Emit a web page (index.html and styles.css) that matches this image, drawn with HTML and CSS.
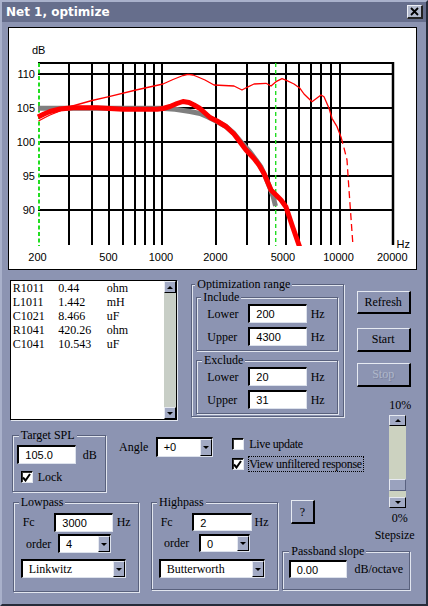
FILE: index.html
```html
<!DOCTYPE html>
<html>
<head>
<meta charset="utf-8">
<title>Net 1, optimize</title>
<link rel="stylesheet" href="styles.css">
</head>
<body>
<div class="window">
  <div class="titlebar">
    <span class="title">Net 1, optimize</span>
    <span class="close"><svg width="9" height="9" viewBox="0 0 9 9"><path d="M1 1L8 8M8 1L1 8" stroke="#000" stroke-width="1.8" fill="none"/></svg></span>
  </div>

  <div class="graph">
    <svg class="chart" width="407" height="241" viewBox="9 28 407 241">
      <defs>
        <clipPath id="plot"><rect x="36" y="60" width="360" height="186"/></clipPath>
      </defs>
      <g stroke="#000" stroke-width="2" fill="none">
        <path d="M38 63H394M38 74H393M38 108H393M38 142H393M38 176H393M38 210H393"/>
        <path d="M69 63V245M92 63V245M109 63V245M123 63V245M135 63V245M145 63V245M154 63V245M162 63V245M216 63V245M247 63V245M269 63V245M286 63V245M299 63V245M311 63V245M321 63V245M331 63V245M340 63V245"/>
        <path d="M393 62V245" stroke-width="2.5"/>
      </g>
      <path d="M39 63V246" stroke="#22dd22" stroke-width="2" stroke-dasharray="4 2.5" fill="none"/>
      <path d="M275.7 63V246" stroke="#22dd22" stroke-width="1.4" stroke-dasharray="4 3" fill="none"/>
      <g font-family="Liberation Sans, Arial, sans-serif" font-size="11" fill="#000">
        <text x="32" y="54">dB</text>
        <text x="35" y="78" text-anchor="end">110</text>
        <text x="35" y="112" text-anchor="end">105</text>
        <text x="35" y="146" text-anchor="end">100</text>
        <text x="35" y="180" text-anchor="end">95</text>
        <text x="35" y="213.5" text-anchor="end">90</text>
        <text x="37.5" y="261" text-anchor="middle">200</text>
        <text x="108.5" y="261" text-anchor="middle">500</text>
        <text x="161" y="261" text-anchor="middle">1000</text>
        <text x="215.5" y="261" text-anchor="middle">2000</text>
        <text x="283" y="261" text-anchor="middle">5000</text>
        <text x="338.5" y="261" text-anchor="middle">10000</text>
        <text x="392.3" y="261" text-anchor="middle">20000</text>
        <text x="396.5" y="247.5">Hz</text>
      </g>
      <g clip-path="url(#plot)" fill="none" stroke-linejoin="round">
        <polyline stroke="#7f7f7f" stroke-width="5" points="38,108.3 160,108.3 175,109.3 190,111.5 200,113.5 208,117 216,121 226,126.5 234,133.5 242,143 250,152 256,160 261,167 266,178 270,188 273,196 275.5,206"/>
        <polyline stroke="#ff0000" stroke-width="1.3" points="38.5,121 45,117.5 50,115 60,111 69,107 92,100.5 109,96.7 136,90 163,84 173,79.5 183,75.5 188,74.3 193,75 198,77 205,80 214,85 234,86 242,90 247,87.3 254,84 266,83.3 271,86 276,81.7 282,78.7 287,80.7 294,84 300,88.3 304,94 312,101.7 317,98 321,95 324,96.7 329,108.3 332,118.3 337,126.7 341,137"/>
        <polyline stroke="#ff0000" stroke-width="1.3" stroke-dasharray="7 4" points="341,137 344,148 347,160 349,190 353,246"/>
        <polyline stroke="#ff0000" stroke-width="5" points="38,117 44,114 50,111.5 60,109 73,107.7 97,107.7 123,109.3 157,109.3 163,108.5 170,106.5 177,103.5 183,101.5 189,102.5 194,105 200,108.5 205,113 210,117.5 217,121 226,126.5 234,134 240,142 246,150 254,158.5 259,165 264,173.5 268,183 271,190 276,195 281,200 286,207 292,225 300,248"/>
      </g>
    </svg>
  </div>

  <div class="lower">
    <div class="listbox">
      <div class="list-items">
        <div class="item"><span class="c1">R1011</span><span class="c2">0.44</span><span>ohm</span></div>
        <div class="item"><span class="c1">L1011</span><span class="c2">1.442</span><span>mH</span></div>
        <div class="item"><span class="c1">C1021</span><span class="c2">8.466</span><span>uF</span></div>
        <div class="item"><span class="c1">R1041</span><span class="c2">420.26</span><span>ohm</span></div>
        <div class="item"><span class="c1">C1041</span><span class="c2">10.543</span><span>uF</span></div>
      </div>
      <div class="vscroll">
        <div class="sbtn"><i class="tri-up"></i></div>
        <div class="sfill"></div>
        <div class="sbtn"><i class="tri-down"></i></div>
      </div>
    </div>

    <div class="group opt">
      <span class="glabel gl-opt">Optimization range</span>
      <div class="group sub">
        <span class="glabel gl-sub">Include</span>
        <div class="frow"><span class="flabel">Lower</span><div class="input w58">200</div><span class="unit">Hz</span></div>
        <div class="frow"><span class="flabel">Upper</span><div class="input w58">4300</div><span class="unit">Hz</span></div>
      </div>
      <div class="group sub">
        <span class="glabel gl-sub2">Exclude</span>
        <div class="frow"><span class="flabel">Lower</span><div class="input w58">20</div><span class="unit">Hz</span></div>
        <div class="frow"><span class="flabel">Upper</span><div class="input w58">31</div><span class="unit">Hz</span></div>
      </div>
    </div>

    <div class="rcol">
      <div class="btn b-refresh">Refresh</div>
      <div class="btn b-start">Start</div>
      <div class="btn b-stop disabled">Stop</div>
      <div class="pct10">10%</div>
      <div class="stepbar">
        <div class="sbtn sb-h"><i class="tri-up"></i></div>
        <div class="strack1"></div>
        <div class="thumb"></div>
        <div class="strack2"></div>
        <div class="sbtn sb-h"><i class="tri-down"></i></div>
      </div>
      <div class="pct0">0%</div>
      <div class="stepsize">Stepsize</div>
    </div>

    <div class="row2">
      <div class="group target">
        <span class="glabel gl-target">Target SPL</span>
        <div class="trow"><div class="input w59">105.0</div><span class="unit u-db">dB</span></div>
        <div class="lockrow">
          <span class="cb"><svg width="9" height="9" viewBox="0 0 9 9"><path d="M1 4.5L3.5 7.5L8 1" stroke="#000" stroke-width="2" fill="none"/></svg></span>
          <span class="locktext">Lock</span>
        </div>
      </div>
      <div class="angle">
        <span class="alabel">Angle</span>
        <div class="combo c-angle"><span class="val">+0</span><span class="dd"><i class="tri-down"></i></span></div>
      </div>
      <div class="checks">
        <div class="chk"><span class="cb"></span><span class="ctext">Live update</span></div>
        <div class="chk"><span class="cb"><svg width="9" height="9" viewBox="0 0 9 9"><path d="M1 4.5L3.5 7.5L8 1" stroke="#000" stroke-width="2" fill="none"/></svg></span><span class="ctext focus">View unfiltered response</span></div>
      </div>
    </div>

    <div class="filters">
      <div class="group lowpass">
        <span class="glabel gl-lp">Lowpass</span>
        <div class="frow-fc"><span class="fc">Fc</span><div class="input w58">3000</div><span class="unit">Hz</span></div>
        <div class="frow-order"><span class="ord">order</span><div class="combo c-ord"><span class="val">4</span><span class="dd"><i class="tri-down"></i></span></div></div>
        <div class="frow-type"><div class="combo c-type"><span class="val serif">Linkwitz</span><span class="dd"><i class="tri-down"></i></span></div></div>
      </div>
      <div class="group highpass">
        <span class="glabel gl-hp">Highpass</span>
        <div class="frow-fc"><span class="fc">Fc</span><div class="input w60">2</div><span class="unit u-hp">Hz</span></div>
        <div class="frow-order"><span class="ord ord-hp">order</span><div class="combo c-ord2"><span class="val">0</span><span class="dd"><i class="tri-down"></i></span></div></div>
        <div class="frow-type"><div class="combo c-type2"><span class="val serif">Butterworth</span><span class="dd"><i class="tri-down"></i></span></div></div>
      </div>
    </div>

    <div class="btn help">?</div>

    <div class="group passband">
      <span class="glabel gl-pb">Passband slope</span>
      <div class="input w58">0.00</div><span class="unit u-oct">dB/octave</span>
    </div>
  </div>
</div>
</body>
</html>
```
FILE: styles.css
```css
* { box-sizing: border-box; }

body {
  margin: 0;
  background: #8c94b2;
  font-family: "Liberation Serif", "Times New Roman", serif;
  font-size: 12px;
  line-height: 14px;
  color: #000;
}

.window {
  width: 428px;
  height: 606px;
  background: #8c94b2;
  border: 2px solid;
  border-color: #a9b1cb #262c3a #262c3a #a9b1cb;
  display: flex;
  flex-direction: column;
  overflow: hidden;
}

.titlebar {
  flex: none;
  height: 20px;
  background: #666e8c;
  display: flex;
  align-items: center;
  padding-left: 4px;
}

.title {
  font-family: "DejaVu Sans", "Liberation Sans", sans-serif;
  font-weight: bold;
  font-size: 12px;
  color: #fff;
}

.close {
  margin-left: auto;
  margin-right: 3px;
  width: 16px;
  height: 14px;
  background: #b3bacd;
  border-style: solid;
  border-width: 1px 2px 2px 1px;
  border-color: #eef0f6 #222 #222 #eef0f6;
  display: flex;
  align-items: center;
  justify-content: center;
}

.graph {
  flex: none;
  margin: 5px 0 0 6px;
  width: 409px;
  height: 243px;
  background: #fff;
  border: 1px solid #000;
}

.chart { display: block; }

.lower {
  flex: none;
  display: grid;
  grid-template-columns: 184px 96px 74px 70px;
  grid-template-rows: 160px 67px 49px 58px;
}

/* group boxes */
.group {
  position: relative;
  flex: none;
  border: 1px solid #59617d;
  box-shadow: inset 1px 1px 0 #e2e6ef, 1px 1px 0 #e2e6ef;
}

.glabel {
  position: absolute;
  top: -8px;
  left: 4px;
  padding: 0 2px;
  background: #8c94b2;
  line-height: 14px;
  white-space: nowrap;
}
.gl-opt { left: 3.6px; }
.gl-sub { left: 4.6px; }
.gl-sub2 { left: 5.3px; }
.gl-target { left: 6px; }
.gl-lp { left: 5px; }
.gl-hp { left: 5.3px; }
.gl-pb { left: 6px; }

/* inputs */
.input {
  flex: none;
  height: 19px;
  background: #fff;
  border-style: solid;
  border-width: 2px 1px 1px 2px;
  border-color: #000 #dde2ec #dde2ec #000;
  font-family: "Liberation Sans", Arial, sans-serif;
  font-size: 11px;
  padding-left: 6px;
  display: flex;
  align-items: center;
}
.w58 { width: 58.4px; }
.w59 { width: 59px; }
.w60 { width: 60px; }

.combo {
  flex: none;
  height: 18.5px;
  display: flex;
  background: #fff;
  border-style: solid;
  border-width: 2px 1px 1px 2px;
  border-color: #000 #dde2ec #dde2ec #000;
}
.combo .val {
  flex: 1;
  padding-left: 6px;
  display: flex;
  align-items: center;
  font-family: "Liberation Sans", Arial, sans-serif;
  font-size: 11px;
}
.combo .val.serif {
  font-family: "Liberation Serif", "Times New Roman", serif;
  font-size: 12px;
}
.combo .dd {
  width: 12px;
  background: #a2aac4;
  border-style: solid;
  border-width: 1px;
  border-color: #e6e9f1 #000 #000 #e6e9f1;
  display: flex;
  align-items: center;
  justify-content: center;
}

.tri-down {
  display: block;
  width: 0;
  height: 0;
  border-left: 3px solid transparent;
  border-right: 3px solid transparent;
  border-top: 3px solid #000;
}
.tri-up {
  display: block;
  width: 0;
  height: 0;
  border-left: 3px solid transparent;
  border-right: 3px solid transparent;
  border-bottom: 3px solid #000;
}

.unit { margin-left: 4px; flex: none; }

/* buttons */
.btn {
  flex: none;
  width: 54px;
  height: 24px;
  background: #8c94b2;
  border-style: solid;
  border-width: 1px 2px 2px 1px;
  border-color: #e6eaf2 #000 #000 #e6eaf2;
  display: flex;
  align-items: center;
  justify-content: center;
}
.disabled {
  color: #b0b8cb;
  text-shadow: 1px 1px 0 #7c84a0;
}

/* list */
.listbox {
  grid-area: 1 / 1 / 2 / 2;
  margin: 10px 0 0 8px;
  width: 167px;
  height: 140px;
  background: #fff;
  border: 1px solid #000;
  box-shadow: 1px 1px 0 #e2e6ef;
  display: flex;
}
.list-items { flex: 1; padding-left: 1.7px; }
.item { display: flex; height: 14px; }
.c1 { width: 45.6px; }
.c2 { width: 48.4px; }

.vscroll {
  width: 12px;
  display: flex;
  flex-direction: column;
  background: #c8cec6;
}
.sfill { flex: 1; }
.sbtn {
  height: 12px;
  background: #a2aac4;
  border-style: solid;
  border-width: 1px;
  border-color: #e6e9f1 #000 #000 #e6e9f1;
  display: flex;
  align-items: center;
  justify-content: center;
}

/* optimization range */
.opt {
  grid-area: 1 / 2 / 2 / 4;
  margin: 14px 0 0 4.7px;
  width: 153.3px;
  height: 133px;
  padding: 12px 0 0 4px;
  display: flex;
  flex-direction: column;
  gap: 9px;
}
.sub {
  width: 142px;
  height: 54px;
  padding: 6px 0 0 10.6px;
}
.frow {
  display: flex;
  align-items: center;
  height: 19px;
}
.frow + .frow { margin-top: 4.4px; }
.flabel { width: 41px; flex: none; }

/* right column */
.rcol {
  grid-area: 1 / 4 / 4 / 5;
  display: flex;
  flex-direction: column;
  align-items: flex-start;
  padding-left: 0.7px;
}
.b-refresh { margin-top: 20.7px; height: 23.5px; }
.b-start { margin-top: 13.8px; }
.b-stop { margin-top: 11px; }
.pct10 { margin: 11px 0 0 32.6px; }
.stepbar {
  margin: 3px 0 0 32.6px;
  width: 17px;
  height: 93px;
  display: flex;
  flex-direction: column;
  background: #ccd2c0;
}
.sb-h { height: 11px; flex: none; }
.strack1 { height: 53px; flex: none; }
.thumb {
  flex: none;
  height: 12px;
  background: #9aa2be;
  border-style: solid;
  border-width: 1px;
  border-color: #e6e9f1 #5a6280 #5a6280 #e6e9f1;
}
.strack2 { height: 6px; flex: none; }
.pct0 { margin: 3px 0 0 35px; }
.stepsize { margin: 3.5px 0 0 18px; }

/* row 2 */
.row2 {
  grid-area: 2 / 1 / 3 / 4;
  display: flex;
  align-items: flex-start;
}
.row2 > * { flex: none; }
.target {
  margin: 5px 0 0 9.7px;
  width: 94.3px;
  height: 56.7px;
  padding: 9px 0 0 4.6px;
}
.trow { display: flex; align-items: center; }
.u-db { margin-left: 6.4px; }
.lockrow {
  display: flex;
  align-items: center;
  margin: 6px 0 0 3.4px;
}
.cb {
  width: 12px;
  height: 12px;
  flex: none;
  background: #fff;
  border-style: solid;
  border-width: 1px;
  border-color: #000 #e2e6ef #e2e6ef #000;
  box-shadow: inset 1px 1px 0 #333;
  display: flex;
  align-items: center;
  justify-content: center;
}
.locktext { margin-left: 5px; }

.angle {
  margin: 7.3px 0 0 13px;
  display: flex;
  align-items: center;
}
.alabel { width: 36.7px; flex: none; }
.c-angle { width: 57.6px; height: 19.4px; }

.checks {
  margin: 5.8px 0 0 18.4px;
  display: flex;
  flex-direction: column;
  gap: 4.7px;
}
.chk {
  display: flex;
  align-items: center;
  height: 16px;
}
.ctext {
  margin-left: 4px;
  height: 16px;
  padding: 0 1px 0 0.5px;
  border: 1px solid transparent;
  display: flex;
  align-items: center;
  white-space: nowrap;
  letter-spacing: -0.3px;
}
.focus { border: 1px dotted #000; }

/* filters */
.filters {
  grid-area: 3 / 1 / 5 / 3;
  display: flex;
  align-items: flex-start;
}
.lowpass {
  margin: 5.3px 0 0 10.7px;
  width: 126.6px;
  height: 89.4px;
}
.highpass {
  margin: 5px 0 0 11.4px;
  width: 127.3px;
  height: 88px;
}
.frow-fc {
  display: flex;
  align-items: center;
  margin-top: 10px;
  padding-left: 9px;
}
.frow-fc .input { height: 18.4px; }
.fc { width: 31.6px; flex: none; }
.u-hp { margin-left: 2.3px; }
.frow-order {
  display: flex;
  align-items: center;
  margin-top: 2.6px;
  padding-left: 12.3px;
}
.ord { width: 32px; flex: none; }
.ord-hp { width: 35px; }
.c-ord { width: 53.3px; }
.c-ord2 { width: 51px; }
.frow-type {
  margin-top: 6.6px;
  padding-left: 7px;
}
.c-type { width: 105.3px; height: 19px; }
.c-type2 { width: 106.3px; height: 19px; }

.help {
  grid-area: 3 / 3 / 4 / 4;
  margin: 3px 0 0 9.3px;
  width: 23.4px;
  height: 24px;
}

.passband {
  grid-area: 4 / 3 / 5 / 5;
  margin: 5px 0 0 0.3px;
  width: 127.7px;
  height: 39px;
  padding: 8px 0 0 5.4px;
  display: flex;
  align-items: flex-start;
}
.passband .input { height: 18.3px; }
.u-oct { margin-left: 7.3px; line-height: 18.3px; }
```
